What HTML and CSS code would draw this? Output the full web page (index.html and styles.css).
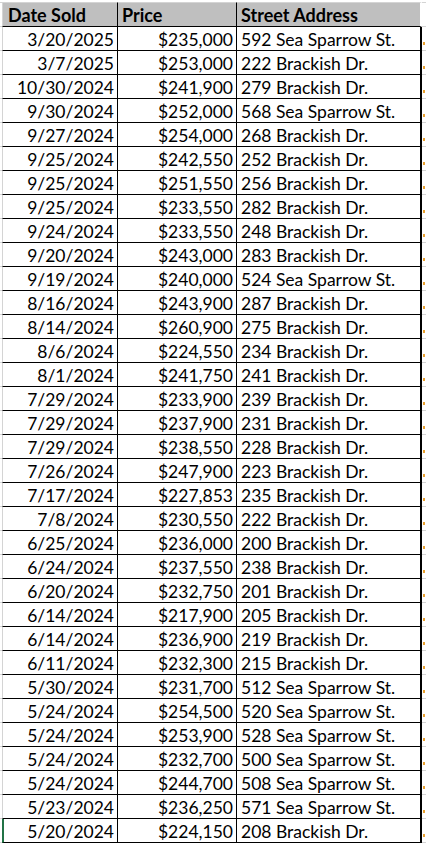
FILE: index.html
```html
<!DOCTYPE html>
<html>
<head>
<meta charset="utf-8">
<link rel="stylesheet" href="styles.css">
</head>
<body>
<div class="sheet">
<table class="grid">
<colgroup><col class="c-date"><col class="c-price"><col class="c-addr"><col class="c-next"></colgroup>
<thead>
<tr><th class="date">Date Sold</th><th class="price">Price</th><th class="addr">Street Address</th><th class="next"></th></tr>
</thead>
<tbody>
<tr><td class="date">3/20/2025</td><td class="price">$235,000</td><td class="addr">592 Sea Sparrow St.</td><td class="next"><span class="mark"></span></td></tr>
<tr><td class="date">3/7/2025</td><td class="price">$253,000</td><td class="addr">222 Brackish Dr.</td><td class="next"><span class="mark"></span></td></tr>
<tr><td class="date">10/30/2024</td><td class="price">$241,900</td><td class="addr">279 Brackish Dr.</td><td class="next"><span class="mark"></span></td></tr>
<tr><td class="date">9/30/2024</td><td class="price">$252,000</td><td class="addr">568 Sea Sparrow St.</td><td class="next"><span class="mark"></span></td></tr>
<tr><td class="date">9/27/2024</td><td class="price">$254,000</td><td class="addr">268 Brackish Dr.</td><td class="next"><span class="mark"></span></td></tr>
<tr><td class="date">9/25/2024</td><td class="price">$242,550</td><td class="addr">252 Brackish Dr.</td><td class="next"><span class="mark"></span></td></tr>
<tr><td class="date">9/25/2024</td><td class="price">$251,550</td><td class="addr">256 Brackish Dr.</td><td class="next"><span class="mark"></span></td></tr>
<tr><td class="date">9/25/2024</td><td class="price">$233,550</td><td class="addr">282 Brackish Dr.</td><td class="next"><span class="mark"></span></td></tr>
<tr><td class="date">9/24/2024</td><td class="price">$233,550</td><td class="addr">248 Brackish Dr.</td><td class="next"><span class="mark"></span></td></tr>
<tr><td class="date">9/20/2024</td><td class="price">$243,000</td><td class="addr">283 Brackish Dr.</td><td class="next"><span class="mark"></span></td></tr>
<tr><td class="date">9/19/2024</td><td class="price">$240,000</td><td class="addr">524 Sea Sparrow St.</td><td class="next"><span class="mark"></span></td></tr>
<tr><td class="date">8/16/2024</td><td class="price">$243,900</td><td class="addr">287 Brackish Dr.</td><td class="next"><span class="mark"></span></td></tr>
<tr><td class="date">8/14/2024</td><td class="price">$260,900</td><td class="addr">275 Brackish Dr.</td><td class="next"><span class="mark"></span></td></tr>
<tr><td class="date">8/6/2024</td><td class="price">$224,550</td><td class="addr">234 Brackish Dr.</td><td class="next"><span class="mark"></span></td></tr>
<tr><td class="date">8/1/2024</td><td class="price">$241,750</td><td class="addr">241 Brackish Dr.</td><td class="next"><span class="mark"></span></td></tr>
<tr><td class="date">7/29/2024</td><td class="price">$233,900</td><td class="addr">239 Brackish Dr.</td><td class="next"><span class="mark"></span></td></tr>
<tr><td class="date">7/29/2024</td><td class="price">$237,900</td><td class="addr">231 Brackish Dr.</td><td class="next"><span class="mark"></span></td></tr>
<tr><td class="date">7/29/2024</td><td class="price">$238,550</td><td class="addr">228 Brackish Dr.</td><td class="next"><span class="mark"></span></td></tr>
<tr><td class="date">7/26/2024</td><td class="price">$247,900</td><td class="addr">223 Brackish Dr.</td><td class="next"><span class="mark"></span></td></tr>
<tr><td class="date">7/17/2024</td><td class="price">$227,853</td><td class="addr">235 Brackish Dr.</td><td class="next"><span class="mark"></span></td></tr>
<tr><td class="date">7/8/2024</td><td class="price">$230,550</td><td class="addr">222 Brackish Dr.</td><td class="next"><span class="mark"></span></td></tr>
<tr><td class="date">6/25/2024</td><td class="price">$236,000</td><td class="addr">200 Brackish Dr.</td><td class="next"><span class="mark"></span></td></tr>
<tr><td class="date">6/24/2024</td><td class="price">$237,550</td><td class="addr">238 Brackish Dr.</td><td class="next"><span class="mark"></span></td></tr>
<tr><td class="date">6/20/2024</td><td class="price">$232,750</td><td class="addr">201 Brackish Dr.</td><td class="next"><span class="mark"></span></td></tr>
<tr><td class="date">6/14/2024</td><td class="price">$217,900</td><td class="addr">205 Brackish Dr.</td><td class="next"><span class="mark"></span></td></tr>
<tr><td class="date">6/14/2024</td><td class="price">$236,900</td><td class="addr">219 Brackish Dr.</td><td class="next"><span class="mark"></span></td></tr>
<tr><td class="date">6/11/2024</td><td class="price">$232,300</td><td class="addr">215 Brackish Dr.</td><td class="next"><span class="mark"></span></td></tr>
<tr><td class="date">5/30/2024</td><td class="price">$231,700</td><td class="addr">512 Sea Sparrow St.</td><td class="next"><span class="mark"></span></td></tr>
<tr><td class="date">5/24/2024</td><td class="price">$254,500</td><td class="addr">520 Sea Sparrow St.</td><td class="next"><span class="mark"></span></td></tr>
<tr><td class="date">5/24/2024</td><td class="price">$253,900</td><td class="addr">528 Sea Sparrow St.</td><td class="next"><span class="mark"></span></td></tr>
<tr><td class="date">5/24/2024</td><td class="price">$232,700</td><td class="addr">500 Sea Sparrow St.</td><td class="next"><span class="mark"></span></td></tr>
<tr><td class="date">5/24/2024</td><td class="price">$244,700</td><td class="addr">508 Sea Sparrow St.</td><td class="next"><span class="mark"></span></td></tr>
<tr><td class="date">5/23/2024</td><td class="price">$236,250</td><td class="addr">571 Sea Sparrow St.</td><td class="next"><span class="mark"></span></td></tr>
<tr class="active"><td class="date">5/20/2024</td><td class="price">$224,150</td><td class="addr">208 Brackish Dr.</td><td class="next"><span class="mark"></span></td></tr>
</tbody>
</table>
</div>
</body>
</html>
```

FILE: styles.css
```css
html, body {
  margin: 0;
  padding: 0;
  background: #ffffff;
  overflow: hidden;
}

.sheet {
  padding: 2px 0 0 2px;
  width: 430px;
  height: 845px;
  box-sizing: border-box;
  background-image: linear-gradient(to bottom, #d4d4d4 1px, transparent 1px);
  background-size: 2px 24px;
  background-position: 0 26px;
  background-repeat: repeat-y;
}

.grid {
  border-collapse: separate;
  border-spacing: 0;
  table-layout: fixed;
  width: 433px;
  font-family: "Lato", "Liberation Sans", sans-serif;
  font-size: 17.5px;
  color: #000;
}

.c-date { width: 116px; }
.c-price { width: 119px; }
.c-addr { width: 185px; }
.c-next { width: 13px; }

th, td {
  padding: 2px 0 0 0;
  box-sizing: content-box;
  line-height: 21px;
  height: 21px;
  white-space: nowrap;
  overflow: hidden;
  border-right: 1px solid #000;
  border-bottom: 1px solid #000;
}

th {
  background: #bfbfbf;
  font-weight: 700;
  font-size: 18px;
  text-align: left;
  border-top: 1px solid #d4d4d4;
}

th.date, td.date {
  border-left: 1px solid #d4d4d4;
}

th.date { padding-left: 5px; }
th.price { padding-left: 4px; }
th.addr { padding-left: 4px; border-right: 2px solid #fff; }
th.next {
  background: #fff;
  border-right: none;
  border-bottom: 1px solid #d4d4d4;
  border-top: 1px solid #d4d4d4;
}

td.date { text-align: right; padding-right: 3px; }
td.price { text-align: right; padding-right: 3px; }
td.addr { text-align: left; padding-left: 4px; border-right: 2px solid #000; }

td.next {
  border-right: none;
  border-bottom: 1px solid #d4d4d4;
  position: relative;
}

.mark {
  position: absolute;
  left: 1px;
  top: 15px;
  width: 2px;
  height: 3px;
  background: #e8a030;
}

.active td.date {
  border-left: 2px solid #217346;
}
```
